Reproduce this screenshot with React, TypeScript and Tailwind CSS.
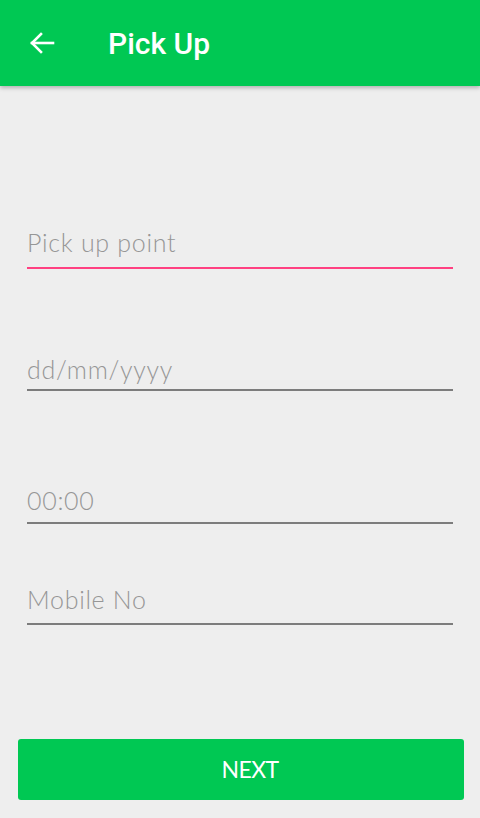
import React from "react";

const fields = [
  { placeholder: "Pick up point", mt: "mt-[140px]", gap: "mb-[9px]", active: true },
  { placeholder: "dd/mm/yyyy", mt: "mt-[84px]", gap: "mb-[4px]", active: false },
  { placeholder: "00:00", mt: "mt-[93px]", gap: "mb-[6px]", active: false },
  { placeholder: "Mobile No", mt: "mt-[59px]", gap: "mb-[8px]", active: false },
];

function BackArrow() {
  return (
    <svg width="26" height="24" viewBox="0 0 26 24" fill="none" stroke="white" strokeWidth="2.6" strokeLinecap="square">
      <path d="M24 12H3" />
      <path d="M12 3L3 12L12 21" />
    </svg>
  );
}

export default function App() {
  return (
    <div className="min-h-screen flex flex-col bg-[#eeeeee] font-['Lato',sans-serif]">
      {/* Toolbar */}
      <header className="h-[86px] bg-[#00c853] flex items-center shadow-[0_2px_4px_rgba(0,0,0,0.25)] relative z-10">
        <button className="ml-[29px] w-[26px] h-[24px] flex items-center justify-center">
          <BackArrow />
        </button>
        <h1 className="ml-[53px] mt-[2px] text-white text-[30px] font-medium font-['Roboto',sans-serif] leading-none">
          Pick Up
        </h1>
      </header>

      {/* Form */}
      <main className="flex-1 flex flex-col px-[27px]">
        {fields.map((f) => (
          <div key={f.placeholder} className={f.mt}>
            <input
              type="text"
              placeholder={f.placeholder}
              className={`block w-full h-8 ${f.gap} bg-transparent outline-none text-[25px] font-light tracking-[0.7px] leading-8 text-[#555] placeholder:text-[#969696]`}
            />
            <div className={f.active ? "h-[2px] bg-[#ff4081]" : "h-[2px] bg-[#7c7c7c]"} />
          </div>
        ))}
      </main>

      <div className="pl-[18px] pr-[16px] pb-[18px]">
        <button className="w-full h-[61px] rounded-[3px] bg-[#00c853] pl-[18px] text-white text-[23px] tracking-tight">
          NEXT
        </button>
      </div>
    </div>
  );
}
